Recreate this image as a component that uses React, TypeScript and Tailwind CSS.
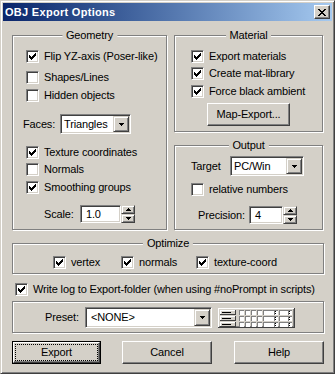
import React from "react";

const FONT = "font-['Liberation_Sans',Arial,sans-serif]";

const raised =
  "border border-t-white border-l-white border-b-[#404040] border-r-[#404040] shadow-[inset_-1px_-1px_0_#808080]";
const comboBtn =
  "border border-t-[#d4d0c8] border-l-[#d4d0c8] border-b-[#404040] border-r-[#404040] shadow-[inset_1px_1px_0_#fff,inset_-1px_-1px_0_#808080]";
const sunken =
  "border border-t-[#808080] border-l-[#808080] border-b-white border-r-white shadow-[inset_1px_1px_0_#404040,inset_-1px_-1px_0_#d4d0c8]";
const etched =
  "relative border border-[#808080] shadow-[inset_1px_1px_0_#fff,1px_1px_0_#fff]";

function CheckMark() {
  return (
    <svg width="7" height="7" viewBox="0 0 7 7" shapeRendering="crispEdges">
      <path
        d="M6 0h1v1h-1z M5 1h2v1h-2z M0 2h1v1h-1z M4 2h3v1h-3z M0 3h2v1h-2z M3 3h3v1h-3z M0 4h5v1h-5z M1 5h3v1h-3z M2 6h1v1h-1z"
        fill="#000"
      />
    </svg>
  );
}

function Box({ checked }: { checked?: boolean }) {
  return (
    <span
      className={`w-[13px] h-[13px] shrink-0 bg-white flex items-center justify-center ${sunken}`}
    >
      {checked && <CheckMark />}
    </span>
  );
}

function Check({
  label,
  checked,
  className = "",
}: {
  label: string;
  checked?: boolean;
  className?: string;
}) {
  return (
    <div className={`flex items-center h-[13px] gap-[5px] ${className}`}>
      <Box checked={checked} />
      <span className="leading-[13px] whitespace-nowrap">{label}</span>
    </div>
  );
}

function DownArrow() {
  return (
    <svg width="5" height="3" viewBox="0 0 5 3" shapeRendering="crispEdges">
      <path d="M0 0H5V1H4V2H3V3H2V2H1V1H0Z" fill="#000" />
    </svg>
  );
}
function UpArrow() {
  return (
    <svg width="5" height="3" viewBox="0 0 5 3" shapeRendering="crispEdges">
      <path d="M2 0H3V1H4V2H5V3H0V2H1V1H2Z" fill="#000" />
    </svg>
  );
}

function Combo({
  value,
  w,
  h,
  pad,
}: {
  value: string;
  w: string;
  h: string;
  pad: string;
}) {
  return (
    <div className={`flex bg-white p-[1px] ${sunken} ${w} ${h}`}>
      <div className={`flex-1 flex items-center leading-[13px] ${pad}`}>{value}</div>
      <div className={`w-[16px] flex items-center justify-center bg-[#d4d0c8] ${comboBtn}`}>
        <DownArrow />
      </div>
    </div>
  );
}

function Spin({ value, w, pad }: { value: string; w: string; pad: string }) {
  return (
    <div className="flex h-[18px]">
      <div className={`bg-white flex items-center leading-[13px] ${sunken} ${w} ${pad}`}>
        {value}
      </div>
      <div className="flex flex-col w-[14px]">
        <div className={`h-[9px] flex items-center justify-center bg-[#d4d0c8] ${comboBtn}`}>
          <UpArrow />
        </div>
        <div className={`h-[9px] flex items-center justify-center bg-[#d4d0c8] ${comboBtn}`}>
          <DownArrow />
        </div>
      </div>
    </div>
  );
}

function GroupLabel({ text }: { text: string }) {
  return (
    <span className="absolute left-1/2 -translate-x-1/2 -top-[7px] bg-[#d4d0c8] px-[4px] leading-[13px] whitespace-nowrap">
      {text}
    </span>
  );
}

function Button({ label, w }: { label: string; w: string }) {
  return (
    <div className={`h-[23px] flex items-center justify-center bg-[#d4d0c8] ${raised} ${w}`}>
      <span className="leading-[13px]">{label}</span>
    </div>
  );
}

function PresetIcon() {
  const rows = [2, 8, 14];
  return (
    <svg width="77" height="20" viewBox="0 0 77 20" shapeRendering="crispEdges">
      <rect width="77" height="20" fill="#d4d0c8" />
      <rect x="0" y="0" width="76" height="1" fill="#fff" />
      <rect x="0" y="0" width="1" height="19" fill="#fff" />
      <rect x="0" y="19" width="77" height="1" fill="#404040" />
      <rect x="76" y="0" width="1" height="20" fill="#404040" />
      <rect x="1" y="18" width="75" height="1" fill="#808080" />
      <rect x="75" y="1" width="1" height="18" fill="#808080" />
      {rows.map((y) => (
        <g key={y}>
          <rect x="2" y={y} width="16" height="5" fill="#d4d0c8" />
          <rect x="2" y={y} width="16" height="1" fill="#fff" />
          <rect x="2" y={y} width="1" height="5" fill="#fff" />
          <rect x="2" y={y + 4} width="16" height="1" fill="#404040" />
          <rect x="17" y={y} width="1" height="5" fill="#404040" />
          <rect x="4" y={y + 2} width="9" height="1" fill="#000" />
          {[21, 27, 33, 39].map((x) => (
            <g key={x}>
              <rect x={x} y={y} width="5" height="5" fill="#808080" />
              <rect x={x + 1} y={y + 1} width="4" height="4" fill="#fff" />
            </g>
          ))}
          <rect x="45" y={y} width="15" height="5" fill="#808080" />
          <rect x="46" y={y + 1} width="14" height="4" fill="#fff" />
          <rect x="56" y={y + 1} width="1" height="4" fill="#808080" />
          <rect x="57" y={y + 1} width="1" height="1" fill="#000" />
          <rect x="57" y={y + 3} width="1" height="1" fill="#000" />
          <rect x="61" y={y} width="13" height="5" fill="#808080" />
          <rect x="62" y={y + 1} width="12" height="4" fill="#fff" />
          <rect x="70" y={y + 1} width="1" height="4" fill="#808080" />
          <rect x="71" y={y + 1} width="1" height="1" fill="#000" />
          <rect x="71" y={y + 3} width="1" height="1" fill="#000" />
        </g>
      ))}
    </svg>
  );
}

function CloseGlyph() {
  return (
    <svg width="8" height="7" viewBox="0 0 8 7" shapeRendering="crispEdges">
      <path
        d="M0 0h2v1h-2z M6 0h2v1h-2z M1 1h2v1h-2z M5 1h2v1h-2z M2 2h4v1h-4z M3 3h2v1h-2z M2 4h4v1h-4z M1 5h2v1h-2z M5 5h2v1h-2z M0 6h2v1h-2z M6 6h2v1h-2z"
        fill="#000"
      />
    </svg>
  );
}

export default function App() {
  return (
    <div
      className={`w-[335px] h-[374px] bg-[#d4d0c8] text-[11px] tracking-[-0.15px] text-black p-[2px] border border-t-[#d4d0c8] border-l-[#d4d0c8] border-b-[#404040] border-r-[#404040] shadow-[inset_1px_1px_0_#fff,inset_-1px_-1px_0_#808080] ${FONT}`}
    >
      {/* caption */}
      <div className="h-[18px] flex items-center justify-between pl-[2px] pr-[2px] bg-gradient-to-r from-[#0a246a] to-[#a6caf0]">
        <span className="text-white font-bold leading-[13px] tracking-[0.3px]">OBJ Export Options</span>
        <div className={`w-[16px] h-[14px] flex items-center justify-center bg-[#d4d0c8] ${raised}`}>
          <CloseGlyph />
        </div>
      </div>

      <div className="pl-[9px] pt-[14px]">
        <div className="flex items-start">
          {/* Geometry */}
          <div className={`w-[155px] h-[195px] ${etched}`}>
            <GroupLabel text="Geometry" />
            <div className="flex flex-col">
              <Check className="mt-[14px] ml-[13px]" label="Flip YZ-axis (Poser-like)" checked />
              <Check className="mt-[8px] ml-[13px]" label="Shapes/Lines" />
              <Check className="mt-[5px] ml-[13px]" label="Hidden objects" />
              <div className="mt-[12px] ml-[10px] flex items-center">
                <span className="w-[37px] leading-[13px]">Faces:</span>
                <Combo value="Triangles" w="w-[71px]" h="h-[20px]" pad="pl-[2px]" />
              </div>
              <Check className="mt-[12px] ml-[13px]" label="Texture coordinates" checked />
              <Check className="mt-[4px] ml-[13px]" label="Normals" />
              <Check className="mt-[5px] ml-[13px]" label="Smoothing groups" checked />
              <div className="mt-[11px] ml-[31px] flex items-center">
                <span className="w-[36px] leading-[13px]">Scale:</span>
                <Spin value="1.0" w="w-[41px]" pad="pl-[5px]" />
              </div>
            </div>
          </div>

          <div className="ml-[7px] flex flex-col">
            {/* Material */}
            <div className={`w-[149px] h-[97px] ${etched}`}>
              <GroupLabel text="Material" />
              <div className="flex flex-col">
                <Check className="mt-[14px] ml-[16px]" label="Export materials" checked />
                <Check className="mt-[4px] ml-[16px]" label="Create mat-library" checked />
                <Check className="mt-[5px] ml-[16px]" label="Force black ambient" checked />
                <div className="mt-[5px] ml-[32px]">
                  <Button label="Map-Export..." w="w-[83px]" />
                </div>
              </div>
            </div>

            {/* Output */}
            <div className={`mt-[13px] w-[149px] h-[85px] ${etched}`}>
              <GroupLabel text="Output" />
              <div className="flex flex-col">
                <div className="mt-[10px] ml-[16px] flex items-center">
                  <span className="w-[39px] leading-[13px]">Target</span>
                  <Combo value="PC/Win" w="w-[74px]" h="h-[20px]" pad="pl-[2px]" />
                </div>
                <Check className="mt-[7px] ml-[16px]" label="relative numbers" />
                <div className="mt-[10px] ml-[23px] flex items-center">
                  <span className="w-[51px] leading-[13px]">Precision:</span>
                  <Spin value="4" w="w-[34px]" pad="pl-[5px]" />
                </div>
              </div>
            </div>
          </div>
        </div>

        {/* Optimize */}
        <div className={`mt-[13px] w-[312px] h-[31px] ${etched}`}>
          <GroupLabel text="Optimize" />
          <div className="mt-[12px] ml-[40px] flex">
            <Check className="w-[68px]" label="vertex" checked />
            <Check className="w-[75px]" label="normals" checked />
            <Check label="texture-coord" checked />
          </div>
        </div>

        <Check
          className="mt-[9px] ml-[3px]"
          label="Write log to Export-folder (when using #noPrompt in scripts)"
          checked
        />

        {/* Preset */}
        <div className={`mt-[5px] w-[312px] h-[32px] ${etched}`}>
          <div className="mt-[5px] ml-[32px] flex items-center">
            <span className="w-[40px] leading-[13px]">Preset:</span>
            <Combo value="<NONE>" w="w-[127px]" h="h-[21px]" pad="pl-[4px]" />
            <div className="ml-[6px] flex">
              <PresetIcon />
            </div>
          </div>
        </div>

        {/* Buttons */}
        <div className="mt-[8px] flex">
          <div className="w-[89px] h-[23px] border border-black flex">
            <div className={`flex-1 flex p-[1px] bg-[#d4d0c8] ${raised}`}>
              <div className="flex-1 border border-dotted border-black flex items-center justify-center">
                <span className="leading-[13px]">Export</span>
              </div>
            </div>
          </div>
          <div className="ml-[21px]">
            <Button label="Cancel" w="w-[90px]" />
          </div>
          <div className="ml-[22px]">
            <Button label="Help" w="w-[90px]" />
          </div>
        </div>
      </div>
    </div>
  );
}
